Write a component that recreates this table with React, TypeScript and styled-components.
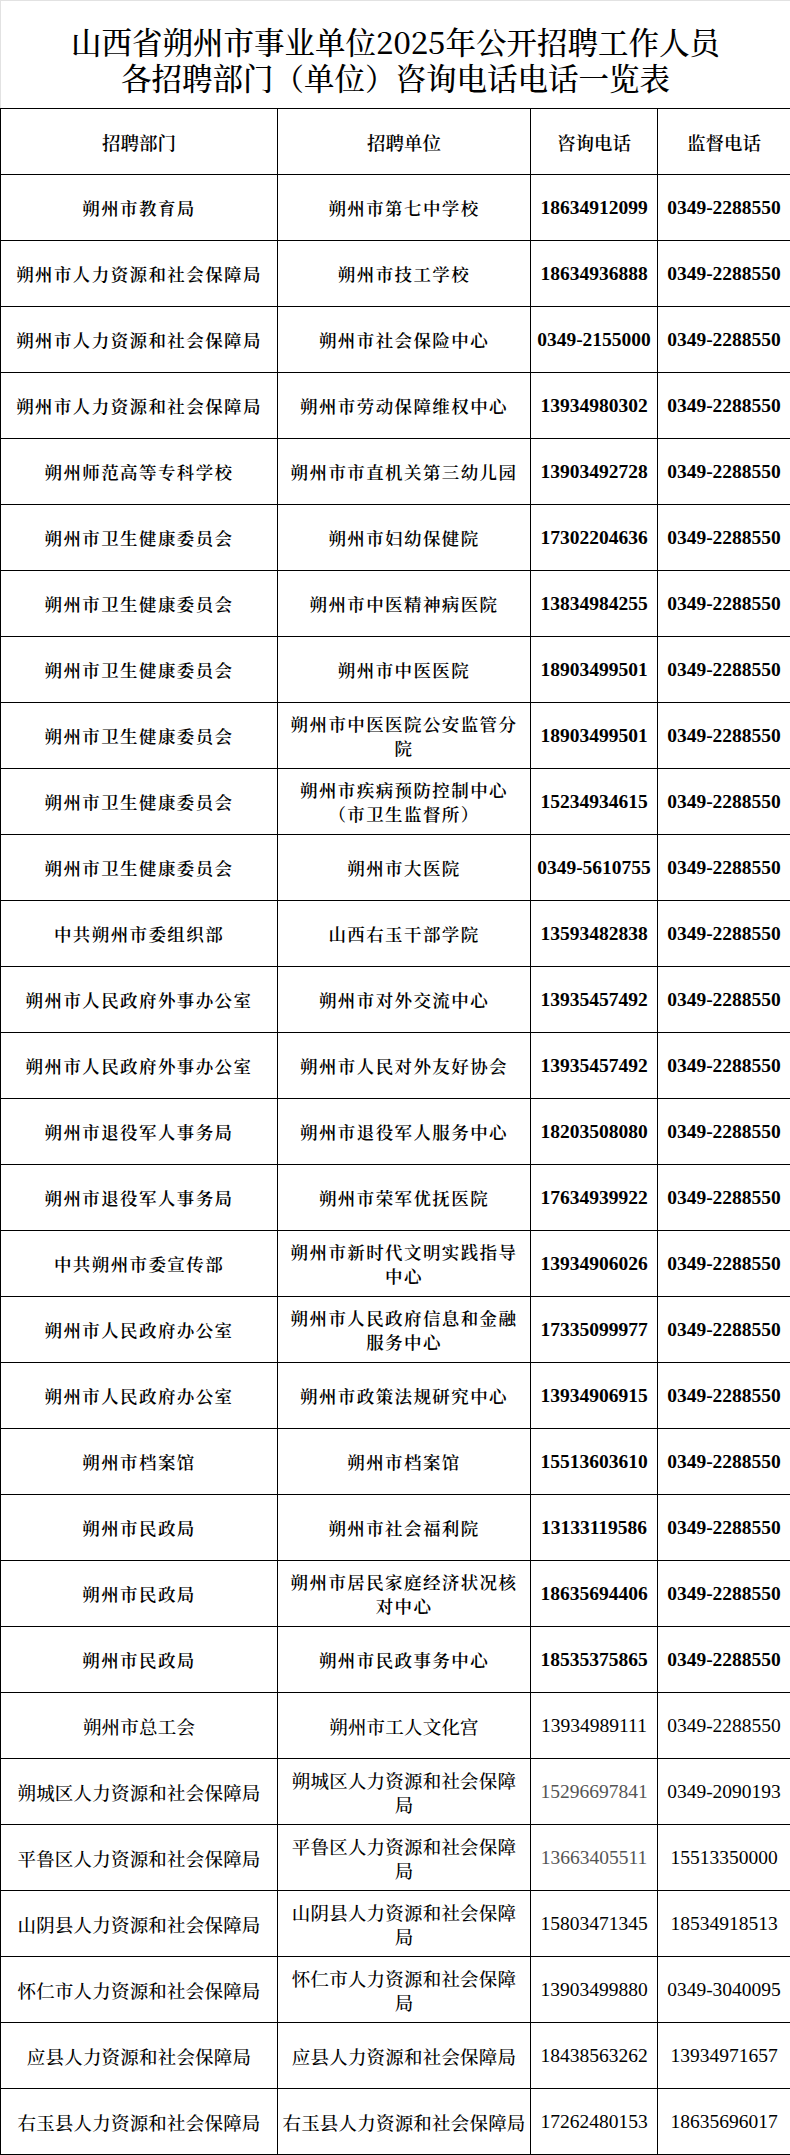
import styled, { createGlobalStyle } from 'styled-components'

const GlobalStyle = createGlobalStyle`
  html, body {
    margin: 0;
    padding: 0;
    background: #ffffff;
  }
`

const SERIF = `"Noto Serif CJK SC", "Liberation Serif", "Noto Sans CJK SC", serif`

// Page
const Page = styled.div`
  width: 790px;
  background: #fff;
  font-family: ${SERIF};
  color: #000;
`

const TitleBlock = styled.div`
  height: 108px;
  box-sizing: border-box;
  padding-top: 22px;
  border-top: 1px solid #e2e2e2;
  border-left: 1px solid #e2e2e2;
  text-align: center;
`

const TitleLine = styled.div`
  font-size: 30.5px;
  line-height: 36px;
  font-weight: 500;
  white-space: nowrap;
`

const Table = styled.table`
  width: 790px;
  border-collapse: collapse;
  table-layout: fixed;
`

const HeadCell = styled.th`
  height: 66px;
  box-sizing: border-box;
  border: 1.5px solid #000;
  font-size: 18.5px;
  font-weight: 600;
  text-align: center;
  vertical-align: middle;
  padding: 0;
`

const Cell = styled.td<{ $condensed?: boolean }>`
  height: 66px;
  box-sizing: border-box;
  border: 1.5px solid #000;
  font-size: ${(p) => (p.$condensed ? '18.5px' : '17.5px')};
  letter-spacing: ${(p) => (p.$condensed ? '0.2px' : '1.4px')};
  font-weight: ${(p) => (p.$condensed ? 500 : 600)};
  line-height: 24px;
  text-align: center;
  vertical-align: middle;
  white-space: pre-line;
  padding: 0 2px;
`

const PhoneCell = styled.td<{ $condensed?: boolean; $muted?: boolean }>`
  height: 66px;
  box-sizing: border-box;
  border: 1.5px solid #000;
  font-family: "Liberation Serif", serif;
  font-size: 19.5px;
  font-weight: ${(p) => (p.$condensed ? 400 : 700)};
  color: ${(p) => (p.$muted ? '#555' : '#000')};
  text-align: center;
  vertical-align: middle;
  white-space: nowrap;
  padding: 0;
`

interface Row {
  dept: string
  unit: string
  phone: string
  supervise: string
  muted?: boolean
}

const S = '0349-2288550'

const rows: Row[] = [
  { dept: '朔州市教育局', unit: '朔州市第七中学校', phone: '18634912099', supervise: S },
  { dept: '朔州市人力资源和社会保障局', unit: '朔州市技工学校', phone: '18634936888', supervise: S },
  { dept: '朔州市人力资源和社会保障局', unit: '朔州市社会保险中心', phone: '0349-2155000', supervise: S },
  { dept: '朔州市人力资源和社会保障局', unit: '朔州市劳动保障维权中心', phone: '13934980302', supervise: S },
  { dept: '朔州师范高等专科学校', unit: '朔州市市直机关第三幼儿园', phone: '13903492728', supervise: S },
  { dept: '朔州市卫生健康委员会', unit: '朔州市妇幼保健院', phone: '17302204636', supervise: S },
  { dept: '朔州市卫生健康委员会', unit: '朔州市中医精神病医院', phone: '13834984255', supervise: S },
  { dept: '朔州市卫生健康委员会', unit: '朔州市中医医院', phone: '18903499501', supervise: S },
  { dept: '朔州市卫生健康委员会', unit: '朔州市中医医院公安监管分\n院', phone: '18903499501', supervise: S },
  { dept: '朔州市卫生健康委员会', unit: '朔州市疾病预防控制中心\n（市卫生监督所）', phone: '15234934615', supervise: S },
  { dept: '朔州市卫生健康委员会', unit: '朔州市大医院', phone: '0349-5610755', supervise: S },
  { dept: '中共朔州市委组织部', unit: '山西右玉干部学院', phone: '13593482838', supervise: S },
  { dept: '朔州市人民政府外事办公室', unit: '朔州市对外交流中心', phone: '13935457492', supervise: S },
  { dept: '朔州市人民政府外事办公室', unit: '朔州市人民对外友好协会', phone: '13935457492', supervise: S },
  { dept: '朔州市退役军人事务局', unit: '朔州市退役军人服务中心', phone: '18203508080', supervise: S },
  { dept: '朔州市退役军人事务局', unit: '朔州市荣军优抚医院', phone: '17634939922', supervise: S },
  { dept: '中共朔州市委宣传部', unit: '朔州市新时代文明实践指导\n中心', phone: '13934906026', supervise: S },
  { dept: '朔州市人民政府办公室', unit: '朔州市人民政府信息和金融\n服务中心', phone: '17335099977', supervise: S },
  { dept: '朔州市人民政府办公室', unit: '朔州市政策法规研究中心', phone: '13934906915', supervise: S },
  { dept: '朔州市档案馆', unit: '朔州市档案馆', phone: '15513603610', supervise: S },
  { dept: '朔州市民政局', unit: '朔州市社会福利院', phone: '13133119586', supervise: S },
  { dept: '朔州市民政局', unit: '朔州市居民家庭经济状况核\n对中心', phone: '18635694406', supervise: S },
  { dept: '朔州市民政局', unit: '朔州市民政事务中心', phone: '18535375865', supervise: S },
  { dept: '朔州市总工会', unit: '朔州市工人文化宫', phone: '13934989111', supervise: S },
  { dept: '朔城区人力资源和社会保障局', unit: '朔城区人力资源和社会保障\n局', phone: '15296697841', supervise: '0349-2090193', muted: true },
  { dept: '平鲁区人力资源和社会保障局', unit: '平鲁区人力资源和社会保障\n局', phone: '13663405511', supervise: '15513350000', muted: true },
  { dept: '山阴县人力资源和社会保障局', unit: '山阴县人力资源和社会保障\n局', phone: '15803471345', supervise: '18534918513' },
  { dept: '怀仁市人力资源和社会保障局', unit: '怀仁市人力资源和社会保障\n局', phone: '13903499880', supervise: '0349-3040095' },
  { dept: '应县人力资源和社会保障局', unit: '应县人力资源和社会保障局', phone: '18438563262', supervise: '13934971657' },
  { dept: '右玉县人力资源和社会保障局', unit: '右玉县人力资源和社会保障局', phone: '17262480153', supervise: '18635696017' },
]

// rows from 总工会 on are typeset in a narrower face
const CONDENSED_FROM = 23

export default function App() {
  return (
    <Page>
      <GlobalStyle />
      <TitleBlock>
        <TitleLine>山西省朔州市事业单位2025年公开招聘工作人员</TitleLine>
        <TitleLine>各招聘部门（单位）咨询电话电话一览表</TitleLine>
      </TitleBlock>
      <Table>
        <colgroup>
          <col style={{ width: 277 }} />
          <col style={{ width: 253 }} />
          <col style={{ width: 127 }} />
          <col style={{ width: 133 }} />
        </colgroup>
        <thead>
          <tr>
            <HeadCell>招聘部门</HeadCell>
            <HeadCell>招聘单位</HeadCell>
            <HeadCell>咨询电话</HeadCell>
            <HeadCell>监督电话</HeadCell>
          </tr>
        </thead>
        <tbody>
          {rows.map((r, i) => {
            const c = i >= CONDENSED_FROM
            return (
              <tr key={i}>
                <Cell $condensed={c}>{r.dept}</Cell>
                <Cell $condensed={c}>{r.unit}</Cell>
                <PhoneCell $condensed={c} $muted={r.muted}>{r.phone}</PhoneCell>
                <PhoneCell $condensed={c}>{r.supervise}</PhoneCell>
              </tr>
            )
          })}
        </tbody>
      </Table>
    </Page>
  )
}
